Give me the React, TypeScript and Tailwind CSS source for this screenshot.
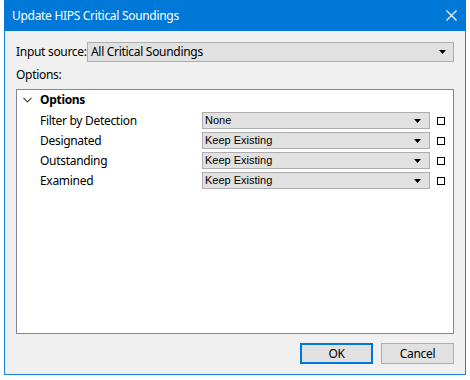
import React from 'react';

const ui = { fontFamily: '"Noto Sans", "Open Sans", sans-serif' };
const small = { fontFamily: '"Liberation Sans", Arial, sans-serif' };

function Arrow() {
  return (
    <svg width="7" height="4" viewBox="0 0 7 4" className="shrink-0">
      <path d="M0 0h7L3.5 4z" fill="#000" />
    </svg>
  );
}

function Combo({ value }: { value: string }) {
  return (
    <div className="flex items-center h-[17px] w-[228px] border border-[#adadad] bg-[#e1e1e1] pl-[2px] pr-[8px]">
      <span className="flex-1 text-[11px] text-black leading-none tracking-normal" style={small}>{value}</span>
      <Arrow />
    </div>
  );
}

const rows = [
  { label: 'Filter by Detection', value: 'None' },
  { label: 'Designated', value: 'Keep Existing' },
  { label: 'Outstanding', value: 'Keep Existing' },
  { label: 'Examined', value: 'Keep Existing' },
];

export default function App() {
  return (
    <div className="w-[470px] h-[380px] bg-white pl-[4px] tracking-[-0.3px]" style={ui}>
      <div className="w-[462px] h-[375px] flex flex-col bg-[#f0f0f0] border-x border-b border-[#1883d7]">
        {/* title bar */}
        <div className="h-[31px] bg-[#0078d7] flex items-center pl-[8px] pr-[9px] -mx-px">
          <span className="flex-1 text-white text-[12px] leading-none">Update HIPS Critical Soundings</span>
          <svg width="11" height="11" viewBox="0 0 11 11">
            <path d="M0.5 0.5l10 10M10.5 0.5l-10 10" stroke="#fff" strokeWidth="1.1" />
          </svg>
        </div>

        <div className="flex-1 flex flex-col pl-[11px] pr-[11px] pt-[11px]">
          <div className="flex items-center h-[20px] text-[12px] text-black">
            <span className="w-[71px] shrink-0 whitespace-nowrap">Input source:</span>
            <div className="flex-1 h-[20px] flex items-center border border-[#adadad] bg-[#e1e1e1] pl-[3px] pr-[7px]">
              <span className="flex-1 leading-none">All Critical Soundings</span>
              <Arrow />
            </div>
          </div>

          <div className="text-[12px] text-black mt-[3px] h-[20px] flex items-center">Options:</div>

          <div className="mt-[4px] h-[245px] border border-[#828790] bg-white">
            <div className="flex items-center h-[20px] pl-[6px]">
              <svg width="9" height="6" viewBox="0 0 9 6" className="mr-[8px]">
                <path d="M0.5 0.8l4 4 4-4" stroke="#444" strokeWidth="1.2" fill="none" />
              </svg>
              <span className="text-[12px] font-bold text-black leading-none">Options</span>
            </div>
            <div className="flex flex-col gap-[3px] mt-[2px]">
              {rows.map((r) => (
                <div key={r.label} className="flex items-center h-[17px]">
                  <span className="w-[185px] pl-[23px] text-[12px] text-black leading-none">{r.label}</span>
                  <Combo value={r.value} />
                  <div className="ml-[7px] w-[8px] h-[8px] border border-black bg-white" />
                </div>
              ))}
            </div>
          </div>

          <div className="flex justify-end gap-[8px] mt-[9px] text-[12px] text-black">
            <button className="w-[73px] h-[21px] border-2 border-[#0078d7] bg-[#e1e1e1] leading-none">OK</button>
            <button className="w-[73px] h-[21px] border border-[#adadad] bg-[#e1e1e1] leading-none">Cancel</button>
          </div>
        </div>
      </div>
    </div>
  );
}
